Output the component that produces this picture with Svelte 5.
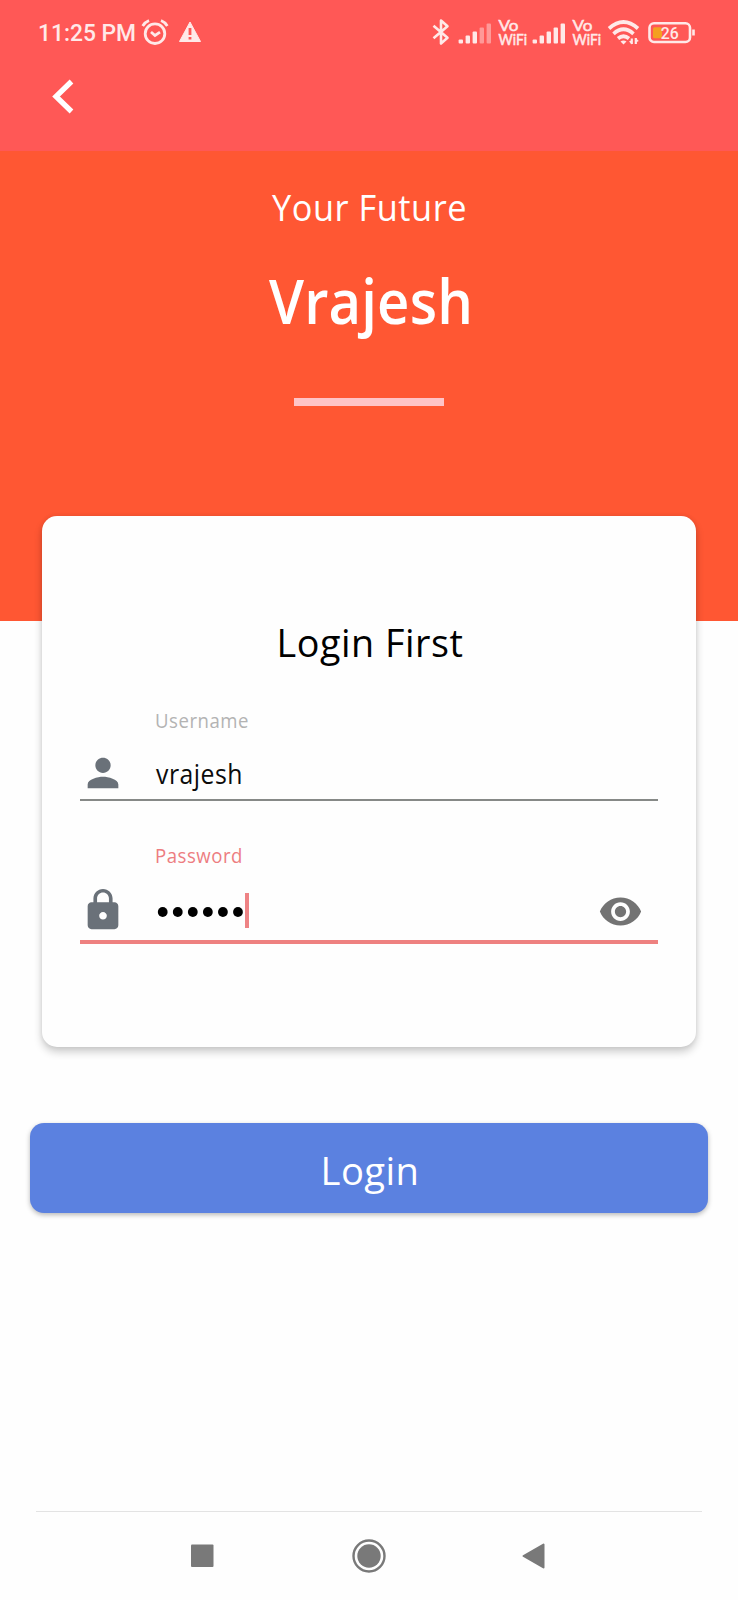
<script>
  const bars = [4, 8, 12, 16, 20];
  const dots = [0, 1, 2, 3, 4, 5];
</script>

{#snippet line(text, width, height, base, size, inset = 0)}
  <svg class="line" {width} {height}>
    <text x={-inset} y={base} font-size={size} textLength={width + inset * 2} lengthAdjust="spacingAndGlyphs">{text}</text>
  </svg>
{/snippet}

{#snippet signal(strength)}
  <svg class="signal" width="34" height="24" viewBox="0 0 34 24">
    {#each bars as h, i}
      <rect x={0.6 + i * 7} y={22.5 - h} width="4.4" height={h} rx="1" opacity={i < strength ? 1 : 0.45} />
    {/each}
  </svg>
{/snippet}

{#snippet vowifi()}
  <svg class="vowifi" width="30" height="28" viewBox="0 0 30 28">
    <text x="0.5" y="11.800" font-size="16" textLength="20" lengthAdjust="spacingAndGlyphs">Vo</text>
    <text x="0.5" y="26" font-size="14.500" textLength="28.500" lengthAdjust="spacingAndGlyphs">WiFi</text>
  </svg>
{/snippet}

<main>
  <header>
    <div class="status">
      <svg class="clock" width="98" height="28">
        <text x="0" y="24" font-size="23" textLength="98" lengthAdjust="spacingAndGlyphs">11:25 PM</text>
      </svg>
      <svg class="alarm" width="28" height="28" viewBox="0 0 28 28" fill="none" stroke="#ffe9e8" stroke-width="2.8">
        <circle cx="14" cy="15.7" r="9.8" />
        <path d="M1.7 8Q4 4 8 2.5M26.3 8Q24 4 20 2.5M10 14l4 3.5 5-3.3" />
      </svg>
      <svg class="warn" width="24" height="22" viewBox="0 0 24 22">
        <path fill="#ffe9e8" d="M12 1L22.5 20.500H1.500Z" stroke="#ffe9e8" stroke-linejoin="round" />
        <path d="M12 7v7M12 16v2.600" stroke="#ff5856" stroke-width="2.800" />
      </svg>
      <svg class="bt" width="18" height="28" viewBox="0 0 18 28" fill="none" stroke="#ffe9e8" stroke-width="2.600" stroke-linejoin="round">
        <path d="M1.5 7.8L15.5 19.8 9 25.5V2.5L15.5 8.2 1.5 20.2" />
      </svg>
      {@render signal(3)}
      {@render vowifi()}
      {@render signal(5)}
      {@render vowifi()}
      <svg class="wifi" width="34" height="28" viewBox="0 0 34 28" fill="none" stroke="#ffe9e8" stroke-width="3.700">
        <path d="M2 10.500Q16.500 -2.500 31 10.500M6.500 15.800Q16.500 6.800 26.500 15.800M11 20.500Q16.500 16 22 20.500" />
        <path d="M13.500 23.500Q16.500 21.500 19.500 23.500L16.500 26.500Z" fill="#ffe9e8" stroke="none" />
        <path d="M24.800 26V20.500M28.800 20V26" stroke-width="2.200" />
        <path d="M22 23.500l3 3V22ZM31.800 23l-3-3V24.500Z" fill="#ffe9e8" stroke="none" />
      </svg>
      <svg class="battery" width="48" height="22" viewBox="0 0 48 22">
        <rect x="1.500" y="1.300" width="40.500" height="18.700" rx="4.500" fill="none" stroke="#ffe9e8" stroke-width="2.600" />
        <rect x="5" y="5.300" width="9" height="11" rx="1.500" fill="#f4a020" />
        <path d="M45.500 7.500v6" stroke="#ffe9e8" stroke-width="2.600" />
        <text x="12.700" y="16.800" font-size="17" font-weight="500" textLength="18" lengthAdjust="spacingAndGlyphs">26</text>
      </svg>
    </div>
    <svg class="back" width="24" height="36" viewBox="0 0 24 36">
      <path d="M20.500 2.500L5 17.500 20.500 32.500" fill="none" stroke="#fff" stroke-width="5.300" />
    </svg>
  </header>

  <section class="hero">
    <div class="kicker">{@render line('Your Future', 195, 44, 34, 36.8)}</div>
    <div class="name">{@render line('Vrajesh', 202, 72, 54, 62, 1)}</div>
    <div class="rule"></div>
  </section>

  <section class="card">
    <div class="title">{@render line('Login First', 182, 48, 35, 39.2, 2.5)}</div>
    <div class="field">
      <div class="caption user">{@render line('Username', 92, 26, 20, 20, 1)}</div>
      <div class="row">
        <svg class="lead" width="46" height="46" viewBox="0 0 24 24"><path d="M12 12c2.210 0 4-1.790 4-4s-1.790-4-4-4-4 1.790-4 4 1.790 4 4 4zm0 2c-2.670 0-8 1.340-8 4v2h16v-2c0-2.660-5.330-4-8-4z" /></svg>
        <div class="value">{@render line('vrajesh', 87, 40, 31, 27.5)}</div>
      </div>
    </div>
    <div class="field active">
      <div class="caption pass">{@render line('Password', 86, 26, 20, 20, 1)}</div>
      <div class="row">
        <svg class="lead" width="46" height="46" viewBox="0 0 24 24"><path d="M18 8h-1V6c0-2.760-2.240-5-5-5S7 3.240 7 6v2H6c-1.100 0-2 .9-2 2v10c0 1.100.9 2 2 2h12c1.100 0 2-.9 2-2V10c0-1.100-.9-2-2-2zm-6 9c-1.100 0-2-.9-2-2s.9-2 2-2 2 .9 2 2-.9 2-2 2zm3.100-9H8.900V6c0-1.710 1.390-3.100 3.100-3.100s3.100 1.390 3.100 3.100v2z" /></svg>
        <svg class="dots" width="90" height="12">
          {#each dots as d}
            <circle cx={7.700 + d * 15.050} cy="6" r="4.900" />
          {/each}
        </svg>
        <div class="caret"></div>
        <svg class="eye" width="45" height="45" viewBox="0 0 24 24"><path d="M12 4.500C7 4.500 2.730 7.610 1 12c1.730 4.390 6 7.500 11 7.500s9.270-3.110 11-7.500c-1.730-4.390-6-7.500-11-7.500zM12 17c-2.760 0-5-2.240-5-5s2.240-5 5-5 5 2.240 5 5-2.240 5-5 5zm0-8c-1.660 0-3 1.340-3 3s1.340 3 3 3 3-1.340 3-3-1.340-3-3-3z" /></svg>
      </div>
    </div>
  </section>

  <button>{@render line('Login', 94, 50, 42, 39.200, 2.500)}</button>

  <nav>
    <svg width="24" height="36" viewBox="0 0 24 36"><rect x="1" y="6.500" width="22.500" height="22.500" rx="1" /></svg>
    <svg width="36" height="36" viewBox="0 0 36 36"><circle cx="19" cy="18" r="11.700" /><circle cx="19" cy="18" r="15.500" fill="none" stroke="#797979" stroke-width="2.400" /></svg>
    <svg width="24" height="36" viewBox="0 0 24 36"><path d="M2.500 18L22.500 6.500V29.500Z" stroke="#797979" stroke-width="2" stroke-linejoin="round" /></svg>
  </nav>
</main>

<style>
  :global(body) { margin: 0; background: #fefefe; }
  main {
    width: 738px;
    height: 1600px;
    display: flex;
    flex-direction: column;
    overflow: hidden;
    background: #fefefe;
    font-family: "Open Sans", sans-serif;
  }
  svg { display: block; flex: none; overflow: visible; }
  .line { fill: currentColor; letter-spacing: 0.035em; }
  header { height: 151px; background: #ff5856; flex: none; }
  .status {
    display: flex;
    align-items: flex-start;
    height: 62px;
    padding: 17px 0 0 38px;
    box-sizing: border-box;
    color: #ffe9e8;
    fill: #ffe9e8;
    font-family: Roboto, sans-serif;
  }
  .clock { font-weight: 500; }
  .alarm { margin: 1px 0 0 4.500px; }
  .warn { margin: 4px 0 0 9px; }
  .bt { margin: 1px 0 0 230px; }
  .signal { margin: 3.500px 6px 0 4.500px; }
  .bt + .signal { margin-left: 8px; }
  .vowifi { font-family: Lato, sans-serif; stroke: #ffe9e8; stroke-width: 0.5px; margin-top: 2px; }
  .wifi { margin: 1px 0 0 4.500px; }
  .battery { margin: 5px 0 0 7px; }
  .back { margin: 17px 0 0 51px; }
  .hero {
    height: 470px;
    flex: none;
    background: #ff5733;
    color: #fff;
    display: flex;
    flex-direction: column;
    align-items: center;
  }
  .kicker { margin: 36px 0 0 1px; }
  .name { margin: 39px 0 0 3px; font-weight: 600; }
  .name .line, .name :global(.line) { letter-spacing: 0.01em; }
  .rule { width: 150px; height: 8px; margin-top: 56px; background: #ffc4c7; }
  .card {
    width: 654px;
    height: 531px;
    flex: none;
    box-sizing: border-box;
    margin: -105px 0 0 42px;
    padding: 106px 38px 0;
    border-radius: 15px;
    background: #fefefe;
    box-shadow: 0 5px 9px rgba(0, 0, 0, 0.2), 0 0 5px rgba(0, 0, 0, 0.08);
  }
  .title { display: flex; justify-content: center; padding-left: 2px; color: #000; }
  .field { height: 91px; margin-top: 38px; border-bottom: 2px solid #868987; }
  .active { height: 97px; margin-top: 42px; border-bottom: 4px solid #ee8180; }
  .caption { padding-left: 76px; color: #b3b3b3; }
  .pass { color: #ed7d81; }
  .row { display: flex; align-items: center; height: 46px; margin-top: 16px; fill: #6a7179; }
  .active .row { margin-top: 18px; }
  .lead { margin-left: -0.5px; }
  .value { margin-left: 30px; color: #0b0b0b; }
  .dots { margin: 3px 0 0 29.500px; fill: #000; }
  .caret { width: 4px; height: 35px; background: #ee8385; }
  .eye { margin: 2px 15.500px 0 auto; fill: #737373; }
  button {
    width: 678px;
    height: 90px;
    flex: none;
    margin: 76px 0 0 30px;
    padding: 0 0 0 1px;
    box-sizing: border-box;
    display: flex;
    align-items: center;
    justify-content: center;
    border: 0;
    border-radius: 14px;
    background: #5b81e0;
    color: #fff;
    font-family: inherit;
    box-shadow: 0 2px 5px rgba(0, 0, 0, 0.28);
  }
  nav {
    width: 666px;
    height: 89px;
    margin: auto auto 0;
    box-sizing: border-box;
    border-top: 1px solid #e3e3e3;
    padding: 26px 157px 0 154px;
    display: flex;
    justify-content: space-between;
    fill: #797979;
  }
</style>
